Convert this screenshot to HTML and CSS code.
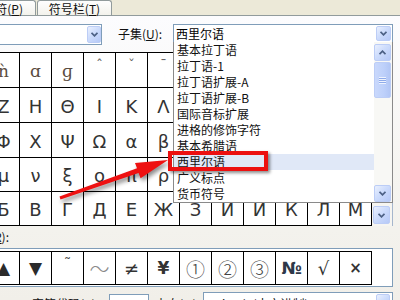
FILE: index.html
```html
<!DOCTYPE html>
<html lang="zh-CN">
<head>
<meta charset="utf-8">
<title>符号</title>
<link rel="stylesheet" href="styles.css">
</head>
<body>
<div class="dialog">
  <div class="tabs">
    <div class="tab tab-first">特殊字符(<u>P</u>)</div>
    <div class="tab tab-bar">符号栏(<u>T</u>)</div>
  </div>
  <div class="panel">
    <div class="toprow">
      <div class="combo combo-font">
        <span class="xpbtn btn-font"><svg width="7" height="5" viewBox="0 0 7 5"><path d="M0.5 0.8 L3.5 3.8 L6.5 0.8" fill="none" stroke="#4d6185" stroke-width="1.8"/></svg></span>
      </div>
      <label class="lbl lbl-subset">子集(<u>U</u>):</label>
      <div class="combo combo-subset">
        <span class="combo-text">西里尔语</span>
        <span class="xpbtn btn-subset"><svg width="7" height="5" viewBox="0 0 7 5"><path d="M0.5 0.8 L3.5 3.8 L6.5 0.8" fill="none" stroke="#4d6185" stroke-width="1.8"/></svg></span>
        <div class="droplist">
          <ul class="items">
            <li class="item">基本拉丁语</li>
            <li class="item">拉丁语-1</li>
            <li class="item">拉丁语扩展-A</li>
            <li class="item">拉丁语扩展-B</li>
            <li class="item">国际音标扩展</li>
            <li class="item">进格的修饰字符</li>
            <li class="item">基本希腊语</li>
            <li class="item item-hover">西里尔语<span class="mark"></span></li>
            <li class="item">广义标点</li>
            <li class="item">货币符号</li>
          </ul>
          <div class="lscroll">
            <span class="xpbtn sb-btn"><svg width="7" height="5" viewBox="0 0 7 5"><path d="M0.5 4.2 L3.5 1.2 L6.5 4.2" fill="none" stroke="#4d6185" stroke-width="1.8"/></svg></span>
            <span class="xpbtn thumb"><span class="grip"></span></span>
            <span class="track"></span>
            <span class="xpbtn sb-btn"><svg width="7" height="5" viewBox="0 0 7 5"><path d="M0.5 0.8 L3.5 3.8 L6.5 0.8" fill="none" stroke="#4d6185" stroke-width="1.8"/></svg></span>
          </div>
        </div>
      </div>
    </div>

    <div class="gridrow">
      <div class="grid">
        <span class="cell ipa">ǹ</span><span class="cell ipa">ɑ</span><span class="cell ipa">ɡ</span><span class="cell mod">ˆ</span><span class="cell mod">ˇ</span><span class="cell mod">ˉ</span><span class="cell"></span><span class="cell"></span><span class="cell"></span><span class="cell"></span><span class="cell"></span><span class="cell"></span>
        <span class="cell">Ζ</span><span class="cell">Η</span><span class="cell">Θ</span><span class="cell">Ι</span><span class="cell">Κ</span><span class="cell">Λ</span><span class="cell"></span><span class="cell"></span><span class="cell"></span><span class="cell"></span><span class="cell"></span><span class="cell"></span>
        <span class="cell">Φ</span><span class="cell">Χ</span><span class="cell">Ψ</span><span class="cell">Ω</span><span class="cell">α</span><span class="cell">β</span><span class="cell"></span><span class="cell"></span><span class="cell"></span><span class="cell"></span><span class="cell"></span><span class="cell"></span>
        <span class="cell">μ</span><span class="cell">ν</span><span class="cell">ξ</span><span class="cell">ο</span><span class="cell">π</span><span class="cell">ρ</span><span class="cell"></span><span class="cell"></span><span class="cell"></span><span class="cell"></span><span class="cell"></span><span class="cell"></span>
        <span class="cell">Б</span><span class="cell">В</span><span class="cell">Г</span><span class="cell">Д</span><span class="cell">Е</span><span class="cell">Ж</span><span class="cell">З</span><span class="cell">И</span><span class="cell">Й</span><span class="cell">К</span><span class="cell">Л</span><span class="cell">М</span>
      </div>
      <div class="vscroll">
        <span class="xpbtn sb-btn gbtn"><svg width="7" height="5" viewBox="0 0 7 5"><path d="M0.5 0.8 L3.5 3.8 L6.5 0.8" fill="none" stroke="#4d6185" stroke-width="1.8"/></svg></span>
      </div>
    </div>

    <div class="recent-lbl"><span class="recent-text">近期使用过的符号(<u>R</u>):</span></div>

    <div class="recent-box">
      <div class="recent-grid">
        <span class="rcell tri">▲</span><span class="rcell tri">▼</span><span class="rcell small-tilde">˜</span><span class="rcell wave">～</span><span class="rcell">≠</span><span class="rcell yen">¥</span><span class="rcell circ">①</span><span class="rcell circ">②</span><span class="rcell circ">③</span><span class="rcell numero">№</span><span class="rcell sqrt">√</span><span class="rcell times">×</span>
      </div>
    </div>

    <div class="bottomrow">
      <label class="lbl lbl-code">字符代码(<u>C</u>):</label>
      <span class="input">0421</span>
      <label class="lbl lbl-from">来自(<u>M</u>):</label>
      <div class="combo combo-from">
        <span class="combo-text">Unicode(十六进制)</span>
        <span class="xpbtn btn-from"></span>
      </div>
    </div>
  </div>

  <svg class="arrow" width="400" height="300" viewBox="0 0 400 300">
    <polygon points="59.5,196.4 137,168.2 135,163 168,160 140.6,178.2 138.6,173.1 60.5,199.6" fill="#ee1111"/>
  </svg>
</div>
</body>
</html>
```

FILE: styles.css
```css
* { box-sizing: border-box; }

html, body {
  margin: 0;
  padding: 0;
}

body {
  width: 400px;
  height: 300px;
  overflow: hidden;
  background: #ece9d8;
  font-family: "Noto Sans CJK SC", "DejaVu Sans", sans-serif;
  font-size: 12px;
  color: #111;
}

.dialog {
  position: relative;
  width: 400px;
  height: 300px;
  overflow: hidden;
}

/* ---------- tabs ---------- */
.tabs {
  display: flex;
  height: 15px;
}

.tab {
  height: 15px;
  border: 1px solid #919b9c;
  border-bottom: none;
  border-radius: 3px 3px 0 0;
  background: linear-gradient(#fefefe, #f3f2ec);
  display: flex;
  align-items: center;
  white-space: nowrap;
  line-height: 13px;
  font-size: 12px;
  color: #111;
}

.tab-first {
  margin-left: -40px;
  width: 76px;
  justify-content: flex-end;
  padding-right: 12px;
}

.tab-bar {
  margin-left: 1px;
  width: 75px;
  justify-content: center;
}

/* ---------- panel ---------- */
.panel {
  border-top: 1px solid #919b9c;
  height: 285px;
  background: linear-gradient(#fcfcfe 0%, #f7f6f3 45%, #f3f2ed 75%, #f1efe9 100%);
}

.toprow {
  display: flex;
  align-items: flex-start;
  padding-top: 8px;
}

.combo {
  position: relative;
  display: flex;
  align-items: flex-start;
  border: 1px solid #7f9db9;
  background: #fff;
  padding: 1px;
}

.combo-text {
  flex: 1;
  white-space: nowrap;
  overflow: hidden;
}

.combo-font {
  margin-left: -20px;
  width: 122px;
  height: 21px;
  justify-content: flex-end;
  padding-right: 0;
}

.xpbtn {
  display: flex;
  align-items: center;
  justify-content: center;
  background: linear-gradient(135deg, #eaf0fe 0%, #cddcfc 45%, #b6c9f7 100%);
  border: 1px solid #bccdf6;
  border-radius: 2px;
}

.btn-font {
  width: 14px;
  height: 17px;
}

.lbl {
  white-space: nowrap;
  line-height: 21px;
  color: #111;
}

.lbl-subset {
  margin-left: 16px;
  width: 55px;
  line-height: 20px;
}

.combo-subset {
  margin-left: 0;
  width: 220px;
  height: 19px;
}

.combo-subset .combo-text {
  padding-left: 1px;
  line-height: 16px;
  font-size: 12px;
  color: #000;
}

.btn-subset {
  width: 15px;
  height: 15px;
}

/* ---------- dropdown list (overlay) ---------- */
.droplist {
  position: absolute;
  left: -1px;
  top: 17px;
  width: 220px;
  height: 161px;
  background: #fff;
  border: 1px solid #8a8a8a;
  border-top: none;
  display: flex;
  z-index: 5;
}

.items {
  list-style: none;
  margin: 0;
  padding: 0;
  width: 200px;
}

.item {
  position: relative;
  height: 16px;
  line-height: 16px;
  padding-left: 3px;
  white-space: nowrap;
  color: #111;
}

.item-hover {
  background: #e0e8f7;
}

.mark {
  position: absolute;
  left: -6px;
  top: -3px;
  width: 100px;
  height: 20px;
  border: 4px solid #ec1010;
  box-shadow: 2px 2px 3px rgba(0, 0, 0, 0.45);
}

.lscroll {
  width: 18px;
  background: #f8f8f5;
  display: flex;
  flex-direction: column;
  padding: 2px 1px 0 0;
}

.sb-btn {
  width: 17px;
  height: 17px;
  flex: none;
}

.thumb {
  width: 17px;
  height: 36px;
  margin-top: 1px;
  flex: none;
  background: linear-gradient(90deg, #c9d8fc, #bdd0fa 60%, #b2c6f5);
}

.grip {
  width: 7px;
  height: 7px;
  background: repeating-linear-gradient(#eef3fe 0 1px, #8fabea 1px 2px);
}

.track {
  flex: 1;
}

/* ---------- symbol grid ---------- */
.gridrow {
  display: flex;
  margin-top: 7px;
  margin-left: -13px;
}

.grid {
  display: grid;
  grid-template-columns: repeat(12, 31px);
  grid-template-rows: 34px 34px 34px 33px 33px;
  gap: 1px;
  padding: 1px;
  background: #000;
  width: 385px;
}

.cell {
  background: #fff;
  display: flex;
  align-items: center;
  justify-content: center;
  font-family: "DejaVu Sans", sans-serif;
  font-size: 18px;
  color: #333;
  padding-top: 2px;
}

.cell.ipa {
  font-family: "DejaVu Serif", serif;
  font-size: 17px;
  color: #5a4c40;
}

.cell.mod {
  align-items: flex-start;
  padding-top: 4px;
  font-size: 14px;
  color: #666;
}

.vscroll {
  width: 21px;
  background: #f6f5f1;
  border-right: 1px solid #a5b6cc;
  display: flex;
  flex-direction: column;
  justify-content: flex-end;
  padding: 0 2px 2px 1px;
}

.gbtn {
  width: 17px;
  height: 18px;
}

/* ---------- recently used ---------- */
.recent-lbl {
  width: 9px;
  height: 22px;
  display: flex;
  justify-content: flex-end;
  align-items: center;
  white-space: nowrap;
}

.recent-text {
  flex: none;
  line-height: 16px;
}

.recent-box {
  margin-left: -16px;
  width: 409px;
  border: 1px solid #7f9db9;
  background: #fff;
  padding: 2px 0 1px 2px;
}

.recent-grid {
  display: grid;
  grid-template-columns: repeat(12, 31px);
  grid-template-rows: 32px;
  gap: 1px;
  padding: 1px;
  background: #000;
  width: 385px;
}

.rcell {
  background: #fff;
  display: flex;
  align-items: center;
  justify-content: center;
  font-family: "DejaVu Sans", sans-serif;
  font-size: 18px;
  color: #333;
}

.rcell.tri {
  font-size: 17px;
  color: #2b2b2b;
}

.rcell.small-tilde {
  align-items: flex-start;
  padding-top: 3px;
  font-size: 15px;
  color: #555;
}

.rcell.wave {
  font-family: "Noto Sans CJK SC", sans-serif;
  font-weight: 300;
  font-size: 20px;
  color: #8a8a8a;
}

.rcell.yen {
  font-weight: bold;
  font-size: 17px;
}

.rcell.circ {
  font-family: "Noto Sans CJK SC", sans-serif;
  font-weight: 300;
  font-size: 19px;
  color: #444;
}

.rcell.numero {
  font-weight: bold;
  font-size: 17px;
  color: #2e3848;
}

.rcell.sqrt {
  font-family: "DejaVu Sans", sans-serif;
  font-size: 18px;
}

.rcell.times {
  font-size: 15px;
  font-weight: bold;
  color: #333;
}

/* ---------- bottom row ---------- */
.bottomrow {
  display: flex;
  align-items: flex-start;
  margin-top: 5px;
}

.lbl-code {
  margin-left: 32px;
  width: 77px;
  padding-top: 1px;
}

.input {
  width: 40px;
  height: 21px;
  margin-top: 2px;
  border: 1px solid #7f9db9;
  background: #fff;
  padding-left: 3px;
  line-height: 19px;
  color: #111;
}

.lbl-from {
  margin-left: 6px;
  width: 48px;
  padding-top: 1px;
}

.combo-from {
  width: 190px;
  height: 21px;
}

.combo-from .combo-text {
  padding-left: 1px;
  line-height: 19px;
}

.btn-from {
  width: 14px;
  height: 17px;
  margin-right: 1px;
}

/* ---------- annotation arrow (overlay) ---------- */
.arrow {
  position: absolute;
  left: 0;
  top: 0;
  pointer-events: none;
  filter: drop-shadow(2px 3px 2px rgba(0, 0, 0, 0.45));
  z-index: 10;
}
```
